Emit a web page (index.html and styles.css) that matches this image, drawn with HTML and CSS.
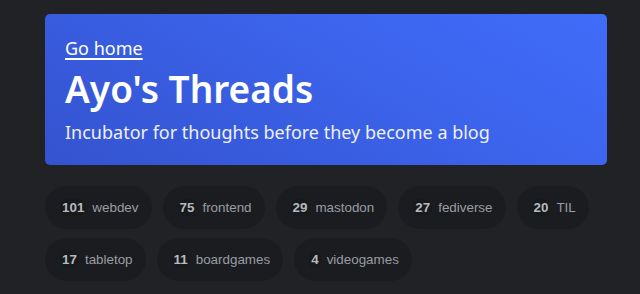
FILE: index.html
```html
<!DOCTYPE html>
<html>

<head>
    <meta charset="UTF-8">
    <title>Ayo's Threads</title>
    <link rel="stylesheet" href="styles.css">
</head>

<body>
    <div class="page">
        <header class="hero">
            <a class="home-link" href="#">Go home</a>
            <h1>Ayo's Threads</h1>
            <p>Incubator for thoughts before they become a blog</p>
        </header>

        <ul class="tags">
            <li class="tag"><span class="count">101</span><span class="name">webdev</span></li>
            <li class="tag"><span class="count">75</span><span class="name">frontend</span></li>
            <li class="tag"><span class="count">29</span><span class="name">mastodon</span></li>
            <li class="tag"><span class="count">27</span><span class="name">fediverse</span></li>
            <li class="tag"><span class="count">20</span><span class="name">TIL</span></li>
            <li class="tag"><span class="count">17</span><span class="name">tabletop</span></li>
            <li class="tag"><span class="count">11</span><span class="name">boardgames</span></li>
            <li class="tag"><span class="count">4</span><span class="name">videogames</span></li>
        </ul>
    </div>
</body>

</html>
```

FILE: styles.css
```css
/* Threads index */
body {
    margin: 0;
    background-color: #202226;
    font-family: "Noto Sans", sans-serif;
    color: #fff;
}

.page {
    width: 562px;
    padding: 14px 0 0 45px;
}

.hero {
    background: linear-gradient(30deg, #3453cf 0%, #3d66f0 70%, #3f6cf9 100%);
    border-radius: 5px;
    padding: 22px 20px 0 20px;
    box-sizing: border-box;
    height: 151px;
}

.home-link {
    color: #fff;
    font-size: 18px;
    line-height: 24px;
    text-decoration: underline;
    text-decoration-thickness: 2px;
    text-underline-offset: 3px;
}

.hero h1 {
    font-size: 37px;
    line-height: 46px;
    font-weight: 600;
    margin: 6px 0 8px 0;
}

.hero p {
    font-size: 18px;
    line-height: 24px;
    margin: 0;
    color: #eef1fc;
}

.tags {
    list-style: none;
    margin: 21px 0 0 0;
    padding: 0;
    display: flex;
    flex-wrap: wrap;
    gap: 9px 11px;
    font-family: "Liberation Sans", Arial, sans-serif;
}

.tag {
    display: flex;
    align-items: center;
    height: 43px;
    padding: 0 13px 0 15px;
    background-color: #1b1c1f;
    border-radius: 22px;
    font-size: 13.4px;
}

.count {
    background-color: #18191b;
    border-radius: 9px;
    padding: 0 2px;
    line-height: 17px;
    font-weight: 700;
    color: #b6bac0;
    margin-right: 6px;
}

.name {
    color: #999da4;
}
```
